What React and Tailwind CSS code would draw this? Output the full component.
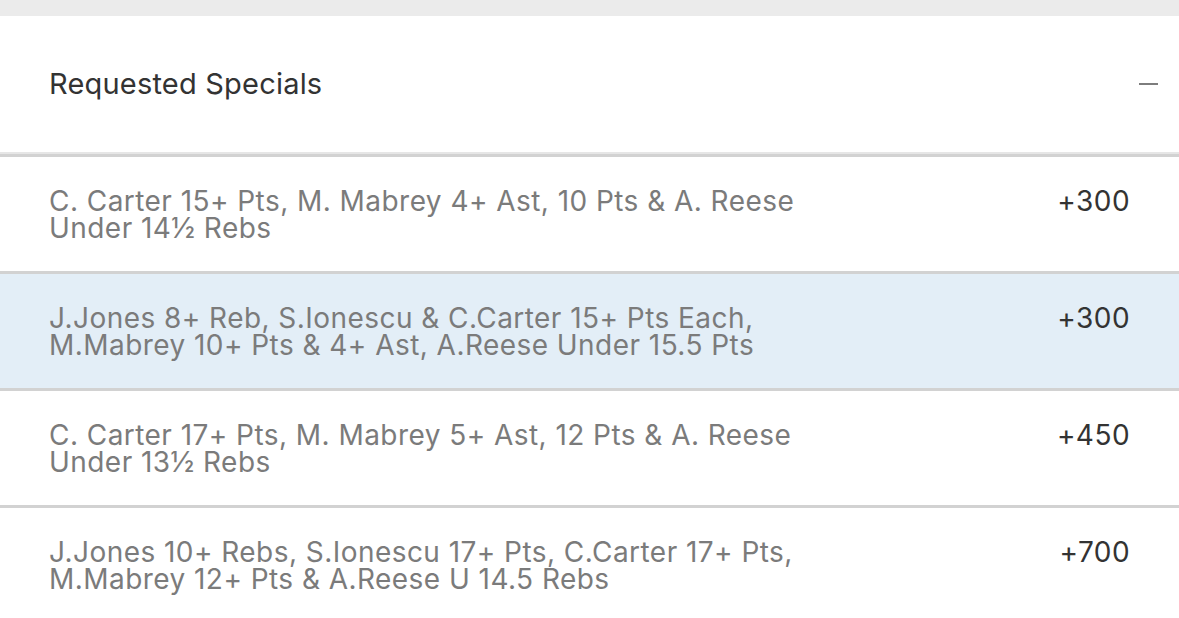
import React from 'react';

const ROWS = [
  { lines: ['C. Carter 15+ Pts, M. Mabrey 4+ Ast, 10 Pts & A. Reese', 'Under 14½ Rebs'], odds: '+300' },
  { lines: ['J.Jones 8+ Reb, S.Ionescu & C.Carter 15+ Pts Each,', 'M.Mabrey 10+ Pts & 4+ Ast, A.Reese Under 15.5 Pts'], odds: '+300', active: true },
  { lines: ['C. Carter 17+ Pts, M. Mabrey 5+ Ast, 12 Pts & A. Reese', 'Under 13½ Rebs'], odds: '+450' },
  { lines: ['J.Jones 10+ Rebs, S.Ionescu 17+ Pts, C.Carter 17+ Pts,', 'M.Mabrey 12+ Pts & A.Reese U 14.5 Rebs'], odds: '+700' },
];

export default function App() {
  return (
    <div className="w-[1179px] h-[618px] overflow-hidden bg-white font-['Inter',sans-serif]">
      {/* top strip */}
      <div className="h-4 bg-[#ebebeb]" />

      {/* section header */}
      <div className="h-[138px] flex items-center justify-between pl-[49px] pr-[21px] border-b-2 border-[#e6e6e6]">
        <span className="text-[29px] text-[#333] tracking-[0.2px]">Requested Specials</span>
        <span className="block w-[19px] h-[2px] bg-[#7d7d7d]" />
      </div>

      {/* bet rows */}
      {ROWS.map((row, i) => (
        <div
          key={i}
          className={`h-[117px] flex items-start justify-between pl-[49px] pr-[49px] pt-[31px] border-t-[3px] border-[#d2d2d2] ${row.active ? 'bg-[#e3eef7]' : 'bg-white'}`}
        >
          <div className="text-[28px] leading-[27px] tracking-[0.45px] text-[#7b7b7b]">
            {row.lines[0]}
            <br />
            {row.lines[1]}
          </div>
          <div className="text-[28px] leading-[27px] tracking-[0.45px] text-[#333]">{row.odds}</div>
        </div>
      ))}
    </div>
  );
}
